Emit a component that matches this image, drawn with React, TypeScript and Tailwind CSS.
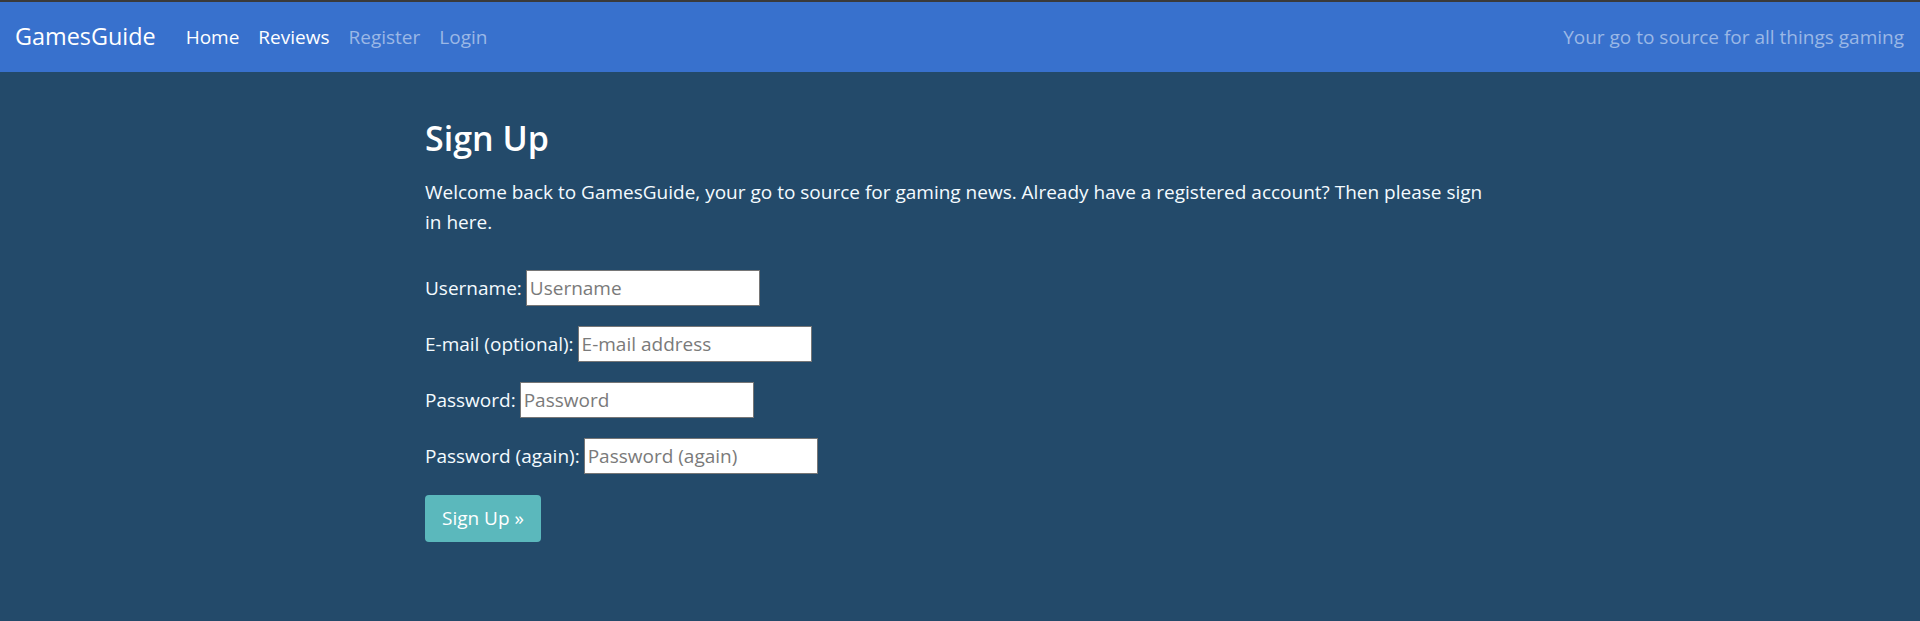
import React from "react";

const font = { fontFamily: '"Open Sans", "Noto Sans", sans-serif' };

function Row({ label, placeholder, type = "text" }: { label: string; placeholder: string; type?: string }) {
  return (
    <p className="mb-5 flex items-center h-9">
      <label className="text-[19px] text-[#f4fbff] mr-[4px]">{label}</label>
      <input
        type={type}
        placeholder={placeholder}
        className="w-[234px] h-9 bg-white border border-[#767676] px-[3px] text-[19px] text-gray-800 placeholder:text-[#7a7a7a] outline-none"
      />
    </p>
  );
}

export default function App() {
  return (
    <div className="min-h-[621px] bg-[#234a6a]" style={font}>
      <div className="h-[2px] bg-[#3a3a3a]" />
      <nav className="h-[70px] bg-[#3871cd] flex items-center pl-[15px] pr-4">
        <a className="text-[23.4px] text-white mr-[30px]">GamesGuide</a>
        <ul className="flex items-center gap-[19px] text-[19px]">
          <li className="text-white">Home</li>
          <li className="text-white">Reviews</li>
          <li className="text-[#9bb8e6]">Register</li>
          <li className="text-[#9bb8e6]">Login</li>
        </ul>
        <span className="ml-auto text-[19px] text-[#9bb8e6]">Your go to source for all things gaming</span>
      </nav>
      <main className="w-[1070px] mx-auto pt-[46px]">
        <h3 className="text-[34px] font-semibold text-white leading-[1.2] mb-[18px]">Sign Up</h3>
        <p className="text-[19px] leading-[30px] text-[#f4fbff] mb-[33px]">
          Welcome back to GamesGuide, your go to source for gaming news. Already have a registered account? Then please sign in here.
        </p>
        <form>
          <Row label="Username:" placeholder="Username" />
          <Row label="E-mail (optional):" placeholder="E-mail address" type="email" />
          <Row label="Password:" placeholder="Password" type="password" />
          <Row label="Password (again):" placeholder="Password (again)" type="password" />
          <button
            type="button"
            className="mt-px h-[47px] px-[17px] rounded-[4px] bg-[#5bb8bc] text-white text-[19px]"
          >
            Sign Up »
          </button>
        </form>
      </main>
    </div>
  );
}
